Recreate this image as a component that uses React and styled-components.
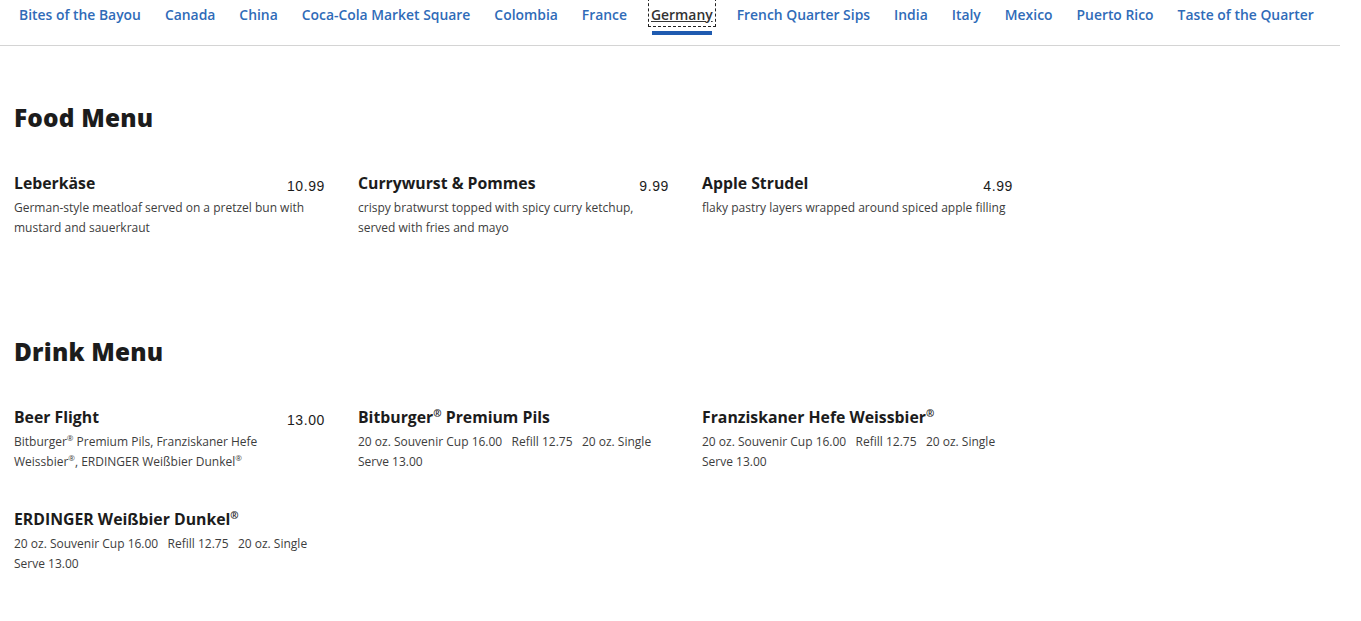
import React from "react";
import styled, { createGlobalStyle } from "styled-components";

const Global = createGlobalStyle`
  html, body { margin: 0; padding: 0; background: #fff; }
  body { font-family: "Open Sans", Lato, sans-serif; color: #222; }
`;

const Page = styled.div`
  width: 1340px;
`;

const Nav = styled.nav`
  display: flex;
  align-items: flex-start;
  gap: 24px;
  padding: 0 0 0 19px;
  height: 45px;
  border-bottom: 1px solid #d4d4d4;
  box-sizing: content-box;
`;

const Tab = styled.a`
  position: relative;
  display: block;
  padding-top: 5px;
  font-size: 13.9px;
  font-weight: 600;
  line-height: 18px;
  color: ${(p) => (p.$active ? "#333" : "#2f6bb8")};
  text-decoration: ${(p) => (p.$active ? "underline" : "none")};
  white-space: nowrap;
  outline: ${(p) => (p.$active ? "1px dashed #222" : "none")};
  outline-offset: 2px;
  margin-top: 1px;
  &::after {
    content: "";
    display: ${(p) => (p.$active ? "block" : "none")};
    position: absolute;
    left: 1px;
    right: 1px;
    top: 30px;
    height: 4px;
    background: #1f5bb0;
  }
`;

const Main = styled.main`
  padding: 0 14px;
`;

const Section = styled.section`
  padding-top: ${(p) => p.$top}px;
`;

const Heading = styled.h2`
  margin: 0;
  font-family: "Open Sans", Lato, sans-serif;
  font-weight: 800;
  font-size: 24.4px;
  line-height: 28px;
  color: #1c1c1c;
  letter-spacing: 0.2px;
`;

const Grid = styled.div`
  display: grid;
  grid-template-columns: repeat(3, 311px);
  column-gap: 33px;
  row-gap: 38px;
  margin-top: 42px;
`;

const Item = styled.div`
  display: flex;
  flex-direction: column;
`;

const ItemHead = styled.div`
  display: flex;
  justify-content: space-between;
  align-items: flex-start;
  height: 24px;
`;

const Name = styled.h3`
  margin: 0;
  font-size: 15.8px;
  font-weight: 700;
  line-height: 18px;
  color: #1c1c1c;
  sup {
    font-size: 10px;
    line-height: 0;
    vertical-align: 6px;
  }
`;

const Price = styled.span`
  font-family: "Liberation Sans", Arial, sans-serif;
  font-size: 14px;
  line-height: 18px;
  letter-spacing: 0.6px;
  color: #1c1c1c;
  padding-top: 3px;
`;

const Desc = styled.p`
  margin: 0;
  max-width: 307px;
  font-size: 12px;
  line-height: 20px;
  color: #3d3d3d;
  sup {
    font-size: 8px;
    line-height: 0;
    vertical-align: 5px;
  }
`;

const tabs = [
  "Bites of the Bayou",
  "Canada",
  "China",
  "Coca-Cola Market Square",
  "Colombia",
  "France",
  "Germany",
  "French Quarter Sips",
  "India",
  "Italy",
  "Mexico",
  "Puerto Rico",
  "Taste of the Quarter",
];

const R = () => <sup>®</sup>;

const food = [
  {
    name: "Leberkäse",
    price: "10.99",
    desc: "German-style meatloaf served on a pretzel bun with mustard and sauerkraut",
  },
  {
    name: "Currywurst & Pommes",
    price: "9.99",
    desc: "crispy bratwurst topped with spicy curry ketchup, served with fries and mayo",
  },
  {
    name: "Apple Strudel",
    price: "4.99",
    desc: "flaky pastry layers wrapped around spiced apple filling",
  },
];

const sizes = (
  <>20 oz. Souvenir Cup 16.00&nbsp;&nbsp; Refill 12.75&nbsp;&nbsp; 20 oz. Single Serve 13.00</>
);

const drinks = [
  {
    name: "Beer Flight",
    price: "13.00",
    desc: (
      <>
        Bitburger<R /> Premium Pils, Franziskaner Hefe Weissbier<R />, ERDINGER Weißbier Dunkel<R />
      </>
    ),
  },
  { name: <>Bitburger<R /> Premium Pils</>, desc: sizes },
  { name: <>Franziskaner Hefe Weissbier<R /></>, desc: sizes },
  { name: <>ERDINGER Weißbier Dunkel<R /></>, desc: sizes },
];

const MenuItem = ({ name, price, desc }) => (
  <Item>
    <ItemHead>
      <Name>{name}</Name>
      {price && <Price>{price}</Price>}
    </ItemHead>
    <Desc>{desc}</Desc>
  </Item>
);

export default function App() {
  return (
    <Page>
      <Global />
      <Nav>
        {tabs.map((t) => (
          <Tab key={t} href="#" $active={t === "Germany"}>
            {t}
          </Tab>
        ))}
      </Nav>
      <Main>
        <Section $top={58}>
          <Heading>Food Menu</Heading>
          <Grid>
            {food.map((f, i) => (
              <MenuItem key={i} {...f} />
            ))}
          </Grid>
        </Section>
        <Section $top={100}>
          <Heading>Drink Menu</Heading>
          <Grid>
            {drinks.map((d, i) => (
              <MenuItem key={i} {...d} />
            ))}
          </Grid>
        </Section>
      </Main>
    </Page>
  );
}
